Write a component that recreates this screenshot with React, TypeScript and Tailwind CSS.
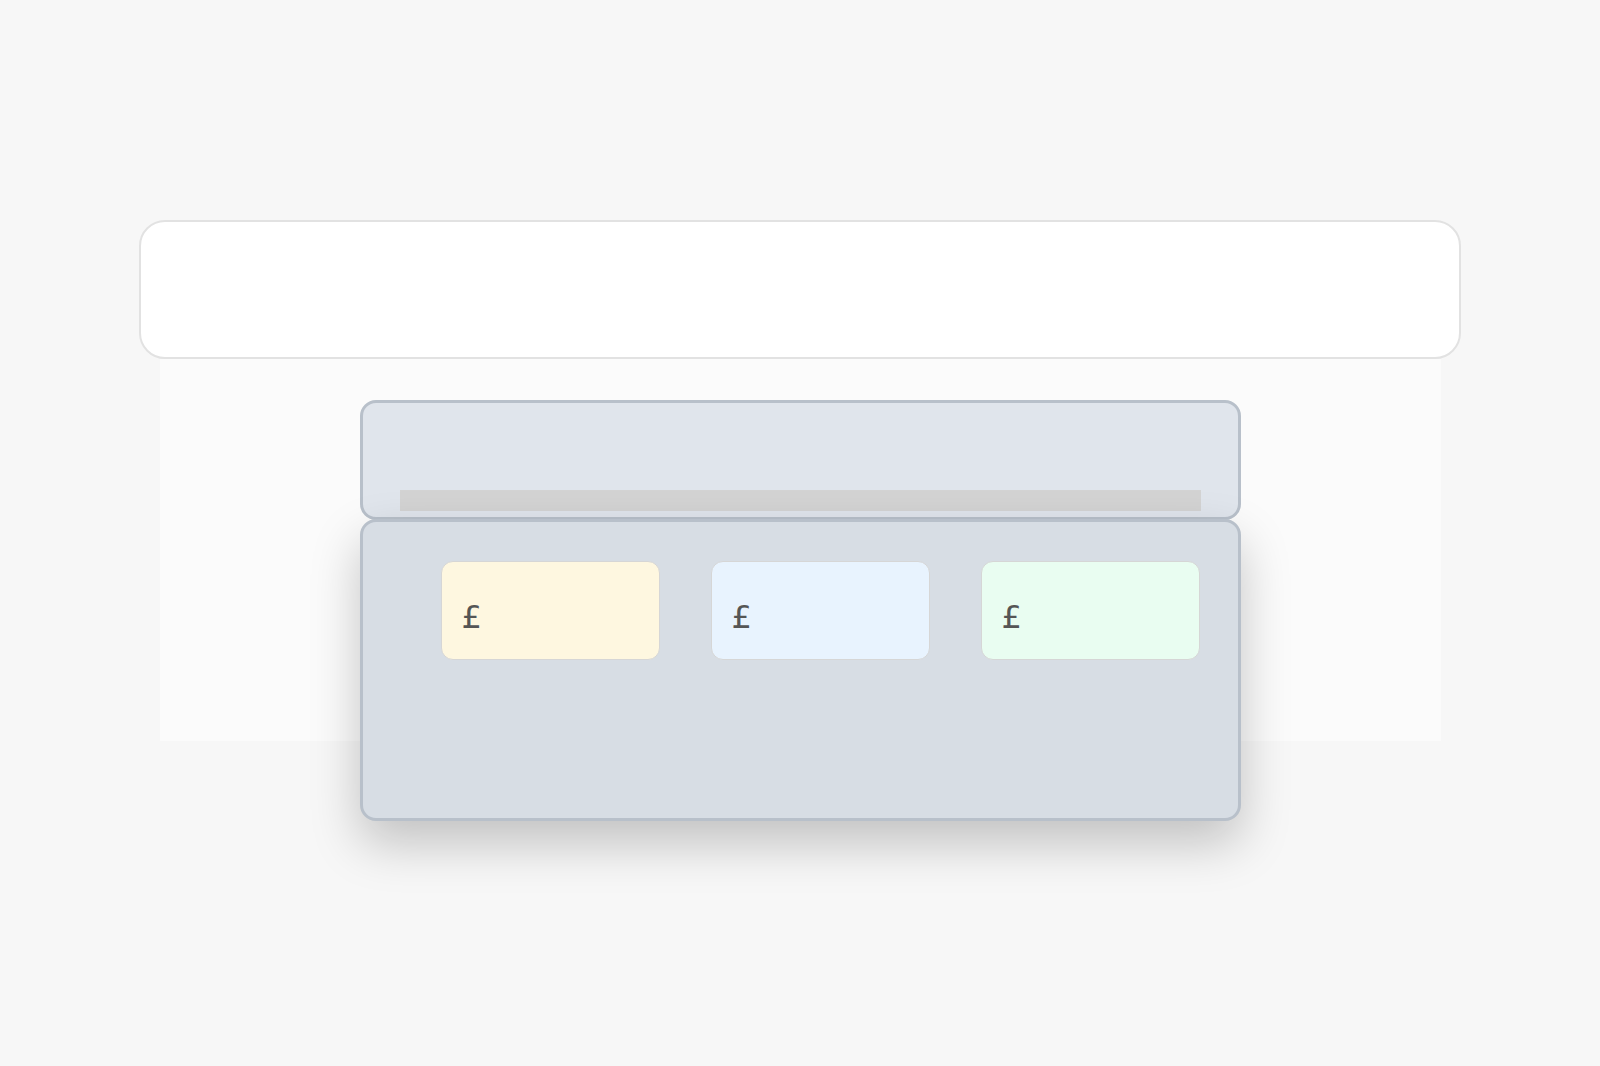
import React from "react";

export default function App() {
  const cards = [
    { bg: "bg-[#fef7e0]" },
    { bg: "bg-[#e8f3fe]" },
    { bg: "bg-[#e9fdf1]" },
  ];

  return (
    <div className="min-h-[1066px] w-full bg-[#f7f7f7] flex flex-col items-center pt-[220px] font-['DejaVu_Sans',sans-serif]">
      {/* Top bar card */}
      <div className="w-[1322px] h-[139px] bg-white border-2 border-[#e2e2e2] rounded-[26px]" />

      {/* Content panel */}
      <div className="w-[1281px] h-[382px] bg-[#fbfbfb] flex flex-col items-center pt-[41px]">
        {/* Dialog */}
        <div className="w-[881px] flex flex-col shrink-0">
          {/* Header */}
          <div className="h-[120px] bg-[#e0e5ec] border-[3px] border-[#b8c0ca] rounded-[16px] flex flex-col justify-end px-[37px] pb-[6px]">
            <div className="h-[21px] bg-[#d3d3d3]" />
          </div>
          {/* Body */}
          <div className="h-[302px] -mt-[1px] bg-[#d7dde4] border-[3px] border-[#b8c0ca] rounded-[16px] shadow-[0_22px_50px_rgba(0,0,0,0.22)] pt-[39px] pl-[78px] pr-[38px]">
            <div className="flex flex-row justify-between">
              {cards.map((item, index) => (
                <div
                  key={index}
                  className={`w-[219px] h-[99px] ${item.bg} border border-[#d6d6d6] rounded-[12px] pl-[20px] pt-[37px]`}
                >
                  <span className="block text-[32px] leading-[37px] text-[#555555]">£</span>
                </div>
              ))}
            </div>
          </div>
        </div>
      </div>
    </div>
  );
}
